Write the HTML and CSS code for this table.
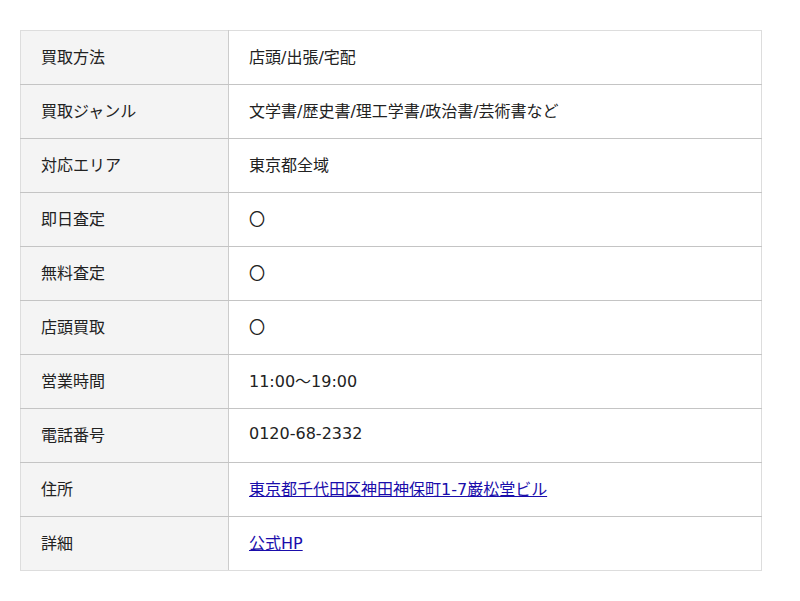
FILE: index.html
```html
<!DOCTYPE html>
<html lang="ja">
<head>
<meta charset="utf-8">
<link rel="stylesheet" href="styles.css">
</head>
<body>
<table class="info">
<tbody>
<tr><th>買取方法</th><td>店頭/出張/宅配</td></tr>
<tr><th>買取ジャンル</th><td>文学書/歴史書/理工学書/政治書/芸術書など</td></tr>
<tr><th>対応エリア</th><td>東京都全域</td></tr>
<tr><th>即日査定</th><td>〇</td></tr>
<tr><th>無料査定</th><td>〇</td></tr>
<tr><th>店頭買取</th><td>〇</td></tr>
<tr><th>営業時間</th><td>11:00～19:00</td></tr>
<tr><th>電話番号</th><td>0120-68-2332</td></tr>
<tr><th>住所</th><td><a href="#">東京都千代田区神田神保町1-7巌松堂ビル</a></td></tr>
<tr><th>詳細</th><td><a href="#">公式HP</a></td></tr>
</tbody>
</table>
</body>
</html>
```
FILE: styles.css
```css
html, body {
  margin: 0;
  padding: 0;
  background: #fff;
}
body {
  padding: 30px 38px 0 20px;
  font-family: "DejaVu Sans", "Noto Sans CJK JP", sans-serif;
  font-size: 16px;
  color: #222;
}
.info {
  width: 742px;
  border-collapse: collapse;
  border: 1px solid #ddd;
}
.info th, .info td {
  height: 54px;
  padding: 0 0 4px 20px;
  text-align: left;
  font-weight: normal;
  vertical-align: middle;
  border-bottom: 1px solid #c4c4c4;
  box-sizing: border-box;
}
.info th {
  width: 208px;
  background: #f4f4f4;
  border-right: 1px solid #ccc;
}
.info tr:last-child th, .info tr:last-child td {
  border-bottom: 1px solid #ddd;
}
.info a {
  color: #1a0dab;
}
```
